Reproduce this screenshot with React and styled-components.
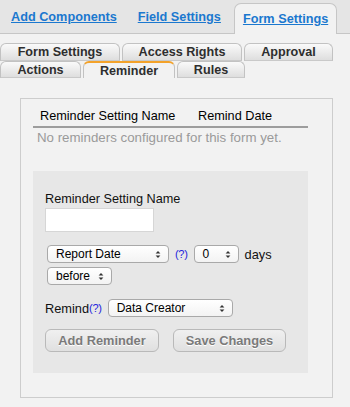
import styled, { createGlobalStyle } from "styled-components";

const GlobalStyle = createGlobalStyle`
  html, body {
    margin: 0;
    padding: 0;
    background: #f2f2f2;
  }
  body {
    font-family: "Liberation Sans", Arial, sans-serif;
    font-size: 13px;
    color: #111;
  }
`;

const topLinks = [
  { label: "Add Components", gap: 0 },
  { label: "Field Settings", gap: 21 },
];

const subRows = [
  [
    { label: "Form Settings", w: 120 },
    { label: "Access Rights", w: 120 },
    { label: "Approval", w: 89 },
  ],
  [
    { label: "Actions", w: 81 },
    { label: "Reminder", w: 92, active: true },
    { label: "Rules", w: 68 },
  ],
];

export default function App() {
  return (
    <Page>
      <GlobalStyle />
      <TopBar>
        {topLinks.map((l) => (
          <TopLink key={l.label} $gap={l.gap}>{l.label}</TopLink>
        ))}
        <TopTab>
          <TopLink as="span">Form Settings</TopLink>
        </TopTab>
      </TopBar>

      <SubTabs>
        {subRows.map((row, i) => (
          <SubRow key={i} $h={i === 0 ? 18 : 17}>
            {row.map((t) => (
              <SubTab key={t.label} $w={t.w} $active={t.active}>
                {t.label}
              </SubTab>
            ))}
          </SubRow>
        ))}
      </SubTabs>

      <Panel>
        <Table>
          <thead>
            <tr>
              <th className="name">Reminder Setting Name</th>
              <th>Remind Date</th>
            </tr>
          </thead>
          <tbody>
            <tr>
              <td colSpan={2}>No reminders configured for this form yet.</td>
            </tr>
          </tbody>
        </Table>

        <FormBox>
          <Label>Reminder Setting Name</Label>
          <TextInput type="text" />

          <Row $top={13} $indent={2}>
            <Select $w={122}>Report Date</Select>
            <Help $l={6} $r={6}>(?)</Help>
            <Select $w={45}>0</Select>
            <span className="days">days</span>
          </Row>
          <Row $top={4} $indent={2}>
            <Select $w={65}>before</Select>
          </Row>

          <Row $top={14} $indent={0}>
            <span>Remind</span>
            <Help $l={0} $r={6}>(?)</Help>
            <Select $w={125}>Data Creator</Select>
          </Row>

          <Buttons>
            <Button $w={114}>Add Reminder</Button>
            <Button $w={113}>Save Changes</Button>
          </Buttons>
        </FormBox>
      </Panel>
    </Page>
  );
}

function Select({ children, $w }) {
  return (
    <SelectBox $w={$w}>
      <span>{children}</span>
      <svg width="6" height="9" viewBox="0 0 6 9">
        <path d="M0.6 3.6 L3 0.9 L5.4 3.6 Z M0.6 5.4 L3 8.1 L5.4 5.4 Z" fill="#333" />
      </svg>
    </SelectBox>
  );
}

const Page = styled.div`
  width: 350px;
  height: 407px;
  overflow: hidden;
  background: #f2f2f2;
`;

const TopBar = styled.div`
  display: flex;
  align-items: flex-end;
  height: 33px;
  padding-left: 11px;
  background: #e5e5e5;
  border-bottom: 1px solid #c6c6c6;
`;

const TopLink = styled.a`
  margin-left: ${(p) => p.$gap || 0}px;
  padding-bottom: 9px;
  font-size: 12.7px;
  font-weight: bold;
  color: #1b78cf;
  text-decoration: underline;
  cursor: pointer;
  white-space: nowrap;
`;

const TopTab = styled.div`
  display: flex;
  align-items: flex-end;
  box-sizing: border-box;
  width: 103px;
  height: 31px;
  margin-left: 13px;
  margin-bottom: -1px;
  padding-left: 8px;
  background: #f2f2f2;
  border: 1px solid #c6c6c6;
  border-bottom: none;
  border-radius: 7px 7px 0 0;

  ${TopLink} {
    padding-bottom: 8px;
  }
`;

const SubTabs = styled.div`
  margin-top: 9px;
`;

const SubRow = styled.div`
  display: flex;
  gap: 2px;
  height: ${(p) => p.$h}px;
`;

const SubTab = styled.div`
  box-sizing: border-box;
  width: ${(p) => p.$w}px;
  height: 100%;
  display: flex;
  align-items: center;
  justify-content: center;
  font-size: 12.6px;
  font-weight: bold;
  color: #2e2e2e;
  border: 1px solid #c2c2c2;
  border-bottom: ${(p) => (p.$active ? "none" : "1px solid #c9c9c9")};
  border-top: ${(p) => (p.$active ? "2px solid #f3a22a" : "1px solid #c2c2c2")};
  border-radius: 6px 6px 0 0;
  background: ${(p) =>
    p.$active ? "#f2f2f2" : "linear-gradient(#fafafa, #dedede)"};
  white-space: nowrap;
`;

const Panel = styled.div`
  box-sizing: border-box;
  width: 313px;
  height: 300px;
  margin: 20px 0 0 20px;
  padding: 8px 12px 0;
  border: 1px solid #cdcdcd;
  background: #f2f2f2;
`;

const Table = styled.table`
  width: 275px;
  border-collapse: collapse;

  th {
    text-align: left;
    font-weight: normal;
    font-size: 12.7px;
    color: #000;
    padding: 0 0 2px 7px;
    height: 17px;
    border-bottom: 2px solid #9d9d9d;
  }

  th.name {
    width: 151px;
  }

  td {
    font-size: 13.3px;
    color: #9a9a9a;
    padding: 0 0 0 4px;
    height: 18px;
  }
`;

const FormBox = styled.div`
  box-sizing: border-box;
  width: 275px;
  height: 202px;
  margin-top: 25px;
  padding: 21px 12px 0;
  background: #e7e7e7;
`;

const Label = styled.div`
  font-size: 12.7px;
  line-height: 15px;
  color: #111;
`;

const TextInput = styled.input`
  display: block;
  box-sizing: border-box;
  width: 109px;
  height: 24px;
  margin-top: 1px;
  border: 1px solid #d6d6d6;
  background: #fff;
  outline: none;
`;

const Row = styled.div`
  display: flex;
  align-items: center;
  margin-top: ${(p) => p.$top}px;
  padding-left: ${(p) => p.$indent}px;
  font-size: 12.8px;

  .days {
    margin-left: 6px;
  }
`;

const SelectBox = styled.div`
  box-sizing: border-box;
  display: flex;
  align-items: center;
  justify-content: space-between;
  width: ${(p) => p.$w}px;
  height: 18px;
  padding: 0 7px 0 8px;
  border: 1px solid #a9a9a9;
  border-radius: 4px;
  background: linear-gradient(#ffffff, #f3f3f3);
  font-size: 12px;
  color: #000;
  white-space: nowrap;
`;

const Help = styled.span`
  margin: 0 ${(p) => p.$r}px 0 ${(p) => p.$l}px;
  color: #2323dd;
  font-size: 11px;
  letter-spacing: -0.3px;
`;

const Buttons = styled.div`
  display: flex;
  gap: 14px;
  margin-top: 12px;
`;

const Button = styled.button`
  box-sizing: border-box;
  width: ${(p) => p.$w}px;
  height: 23px;
  padding: 0;
  border: 1px solid #b9b9b9;
  border-radius: 6px;
  background: linear-gradient(#f0f0f0, #e0e0e0);
  font-family: "Liberation Sans", Arial, sans-serif;
  font-size: 12.8px;
  font-weight: bold;
  color: #7a7a7a;
  text-shadow: 0 1px 0 #fff;
`;
